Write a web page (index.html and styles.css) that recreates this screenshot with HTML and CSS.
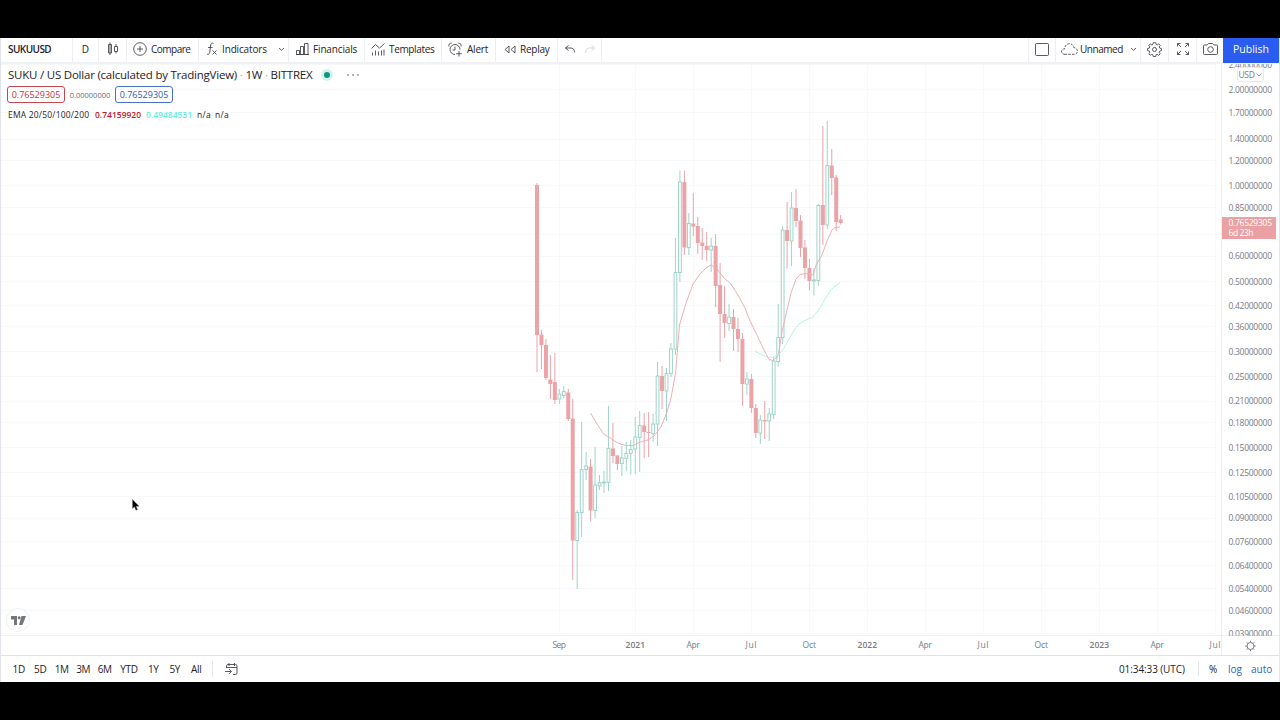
FILE: index.html
```html
<!doctype html>
<html>
<head>
    <meta charset="utf-8">
    <title>SUKUUSD</title>
    <link rel="stylesheet" href="styles.css">
</head>
<body>

<div class="app">
    <div class="toolbar">
        <div class="tool symbol"><span>SUKUUSD</span></div>
        <div class="tool interval"><span>D</span></div>
        <div class="tool candle-style">
            <svg width="12" height="14" viewBox="0 0 12 14"><path d="M3 0.500v2M3 11v2M9 2v2.500M9 9.500v2M1.500 2.500h3v8.500h-3zM3 3v8M7.500 4.500h3v5h-3z"/></svg>
        </div>
        <div class="tool compare">
            <svg width="14" height="14" viewBox="0 0 14 14"><circle cx="7" cy="7" r="6.300"/><path d="M7 4v6M4 7h6"/></svg>
            <span>Compare</span>
        </div>
        <div class="tool indicators">
            <svg width="12" height="14" viewBox="0 0 12 14"><path d="M7.500 1.500C6.500 0.500 5 1 4.700 3L3.700 10.500C3.400 12.500 2 12.800 1 12M2 5.500h4.500M6.500 8.500l4 4M10.500 8.500l-4 4"/></svg>
            <span>Indicators</span>
            <svg class="caret" width="7" height="5" viewBox="0 0 7 5"><path d="M1 1l2.500 2.300L6 1"/></svg>
        </div>
        <div class="tool financials">
            <svg width="13" height="12" viewBox="0 0 13 12"><path d="M0.500 11.500v-4h3v4zM4.500 11.500v-8h3v8zM8.500 11.500v-11h3.500v11zM0 11.500h13"/></svg>
            <span>Financials</span>
        </div>
        <div class="tool templates">
            <svg width="14" height="13" viewBox="0 0 14 13"><path d="M0.500 5.500l4-4 4 3.500 5-4.500M1.500 12.500v-3M4.500 12.500v-5M7.500 12.500v-4M10.500 12.500v-5M13 12.500v-6"/></svg>
            <span>Templates</span>
        </div>
        <div class="tool alert">
            <svg width="15" height="15" viewBox="0 0 15 15"><path d="M12 7.500A5 5 0 1 0 7 12.500M7 4.500v3.500H4.500M1 4.500C0.300 2.500 1.500 1 3.700 1.200M10.300 1.200c2.200-.2 3.400 1.300 2.700 3.300M11 9v5.500M8.200 11.700h5.600"/></svg>
            <span>Alert</span>
        </div>
        <div class="tool replay">
            <svg width="12" height="9" viewBox="0 0 12 9"><path d="M5 1v7L1 4.500zM11 1v7L7 4.500z"/></svg>
            <span>Replay</span>
        </div>
        <div class="tool history">
            <svg width="10" height="8" viewBox="0 0 10 8"><path d="M3.500 0.500l-3 2.500 3 2.500M0.500 3h5C8 3 9.500 4.500 9.500 7.500"/></svg>
            <svg class="disabled" width="10" height="8" viewBox="0 0 10 8"><path d="M6.500 0.500l3 2.500-3 2.500M9.500 3h-5C2 3 0.500 4.500 0.500 7.500"/></svg>
        </div>
        <div class="spacer"></div>
        <div class="tool layout">
            <svg width="14" height="13" viewBox="0 0 14 13"><rect x="0.500" y="0.500" width="13" height="12" rx="1"/></svg>
        </div>
        <div class="tool unnamed">
            <svg class="dashed" width="17" height="12" viewBox="0 0 17 12"><path d="M4 11.300C1.500 11.300 0.500 10 0.500 8.500S2 5.800 3.500 6C4 2.500 6 0.700 8.500 0.700c2.300 0 3.800 1.300 4.200 3.800 2 .3 3.700 1.700 3.700 3.800 0 1.800-1.300 3-3.200 3z"/></svg>
            <span>Unnamed</span>
            <svg class="caret" width="7" height="5" viewBox="0 0 7 5"><path d="M1 1l2.500 2.300L6 1"/></svg>
        </div>
        <div class="tool small">
            <svg width="15" height="15" viewBox="0 0 15 15"><circle cx="7.500" cy="7.500" r="2"/><path d="M6.300 0.700h2.400l.4 1.700 1.100.5 1.500-1 1.500 1.500-1 1.500.6 1.300 1.600.3v2.200l-1.600.3-.6 1.300 1 1.500-1.500 1.500-1.500-1-1.100.5-.4 1.700H6.300l-.4-1.700-1.100-.5-1.500 1-1.500-1.500 1-1.500-.6-1.300-1.600-.3V6.500l1.600-.3.6-1.300-1-1.500 1.500-1.500 1.500 1 1.100-.5z"/></svg>
        </div>
        <div class="tool small">
            <svg width="12" height="12" viewBox="0 0 12 12"><path d="M0.500 3.500V0.500H3.500M8.500 0.500h3v3M11.500 8.500v3h-3M3.500 11.500h-3v-3M0.500 0.500L4 4M11.500 0.500L8 4M11.500 11.500L8 8M0.500 11.500L4 8"/></svg>
        </div>
        <div class="tool camera">
            <svg width="15" height="12" viewBox="0 0 15 12"><path d="M1.500 2h2.700L5.500 0.500h4L10.800 2h2.700q1 0 1 1v7.500q0 1-1 1h-12q-1 0-1-1V3q0-1 1-1z"/><circle cx="7.500" cy="6.500" r="2.800"/></svg>
        </div>
        <div class="publish"><span>Publish</span></div>
    </div>

    <div class="chart">
        <svg id="chart" width="1278" height="591" viewBox="1 64 1278 591"></svg>

        <div class="legend">
            <div class="title">
                <span class="name">SUKU / US Dollar (calculated by TradingView) <i>·</i> 1W <i>·</i> BITTREX</span>
                <span class="status"></span>
                <span class="more"><b></b><b></b><b></b></span>
            </div>
            <div class="prices">
                <span class="bid">0.76529305</span>
                <span class="spread">0.00000000</span>
                <span class="ask">0.76529305</span>
            </div>
            <div class="ema">
                <span class="ema-name">EMA 20/50/100/200</span>
                <span class="ema-fast">0.74159920</span>
                <span class="ema-slow">0.49484531</span>
                <span class="ema-none">n/a</span>
                <span class="ema-none">n/a</span>
            </div>
        </div>

        <div class="currency">USD <svg width="6" height="4" viewBox="0 0 6 4"><path d="M0.500 0.500L3 3l2.500-2.500"/></svg></div>

        <div class="logo">
            <svg width="15" height="9" viewBox="0 0 15 9"><path d="M0 0h6v9H3V3.500H0zM10.500 0H15l-3.500 9H8z"/><circle cx="8.200" cy="1.700" r="1.500"/></svg>
        </div>

        <svg class="cursor" width="8" height="12" viewBox="0 0 8 12"><path d="M0.500 0.500v9l2-1.800 1.500 3.500 1.500-.7L4 7.200h3z"/></svg>
    </div>

    <div class="bottom">
        <div class="ranges">
            <span>1D</span><span>5D</span><span>1M</span><span>3M</span><span>6M</span><span>YTD</span><span>1Y</span><span>5Y</span><span>All</span>
        </div>
        <div class="goto">
            <svg width="13" height="12" viewBox="0 0 13 12"><path d="M1.500 5V3q0-1.500 1.500-1.500h7.500Q12 1.500 12 3v7q0 1.500-1.500 1.500H8M1.500 4.500H12M4 0v3M9.500 0v3M0 8.500h6M4 6l2.500 2.500L4 11"/></svg>
        </div>
        <div class="spacer"></div>
        <span class="clock">01:34:33 (UTC)</span>
        <span class="percent">%</span>
        <span class="log">log</span>
        <span class="auto">auto</span>
    </div>
</div>

<script src="chart.js"></script>
</body>
</html>
```

FILE: styles.css
```css
body {
    margin: 0;
    background: #000;
    font-family: "Open Sans", "Noto Sans", sans-serif;
    color: #1e2128;
}
svg {
    display: block;
    flex: none;
    fill: none;
    stroke: #3c3f46;
    stroke-width: 0.850;
}
#chart {
    stroke-width: 1;
}
.app {
    width: 1278px;
    height: 644px;
    margin-top: 38px;
    border-left: 1px solid #e0e3eb;
    border-right: 1px solid #e6e6ea;
    background: #fff;
    display: flex;
    flex-direction: column;
    overflow: hidden;
}

/* top toolbar */
.toolbar {
    display: flex;
    height: 24px;
    border-bottom: 2px solid #f0f1f4;
    font-size: 10px;
}
.tool {
    box-sizing: border-box;
    display: flex;
    align-items: center;
    height: 24px;
    padding-bottom: 2px;
    border-right: 1px solid #eceef2;
    white-space: nowrap;
    flex: none;
}
.tool span {
    line-height: 22px;
}
.symbol {
    width: 72px;
    padding-left: 7px;
    font-size: 10px;
    font-weight: 600;
    letter-spacing: -0.550px;
}
.interval {
    width: 26px;
    justify-content: center;
}
.candle-style {
    width: 28px;
    justify-content: center;
}
.compare {
    width: 72px;
    padding-left: 6px;
    gap: 4px;
    letter-spacing: -0.500px;
}
.indicators {
    width: 90px;
    padding-left: 7px;
    gap: 4px;
    letter-spacing: -0.150px;
}
.caret {
    margin-left: auto;
    margin-right: 3px;
}
.financials {
    width: 76px;
    padding-left: 7px;
    gap: 4px;
    letter-spacing: -0.150px;
}
.templates {
    width: 77px;
    padding-left: 6px;
    gap: 4px;
    letter-spacing: -0.350px;
}
.alert {
    width: 54px;
    padding-left: 6px;
    gap: 4px;
    letter-spacing: -0.200px;
}
.replay {
    width: 62px;
    padding-left: 8px;
    gap: 4px;
    letter-spacing: -0.250px;
}
.history {
    width: 44px;
    padding-left: 7px;
    gap: 10px;
}
.disabled {
    stroke: #cfd1d6;
}
.spacer {
    flex: 1;
}
.layout {
    width: 28px;
    justify-content: center;
    border-left: 1px solid #eceef2;
}
.unnamed {
    width: 85px;
    padding-left: 5px;
    gap: 2px;
    letter-spacing: -0.450px;
}
.dashed {
    stroke-dasharray: 2.500 1.200;
}
.small {
    width: 28px;
    justify-content: center;
}
.camera {
    width: 26px;
    justify-content: center;
    border-right: 0;
}
.publish {
    width: 56px;
    height: 25px;
    background: #2a5cf0;
    color: #fff;
    font-size: 10.500px;
    line-height: 23px;
    text-align: center;
}

/* chart area */
.chart {
    position: relative;
    height: 591px;
    border-bottom: 1px solid #e0e2e8;
}
.chart text {
    stroke: none;
    fill: #787b86;
    font-size: 8.500px;
}
.chart .year {
    font-weight: 600;
}
.chart .last {
    fill: #fff;
}
.legend {
    position: absolute;
    left: 6px;
    top: 2px;
    white-space: nowrap;
}
.title {
    display: flex;
    align-items: center;
    height: 17px;
    padding-left: 1px;
    font-size: 11.500px;
    letter-spacing: -0.220px;
}
.title i {
    color: #a0a3ab;
    font-style: normal;
}
.name {
    width: 303px;
}
.status {
    width: 6px;
    height: 6px;
    margin-left: 10px;
    border: 3px solid #d5f2ec;
    border-radius: 50%;
    background: #089981;
}
.more {
    display: flex;
    gap: 3px;
    margin-left: 14px;
}
.more b {
    width: 2px;
    height: 2px;
    border-radius: 1px;
    background: #9598a1;
}
.prices {
    display: flex;
    align-items: center;
    margin-top: 3px;
    font-size: 9px;
}
.bid, .ask {
    box-sizing: border-box;
    width: 58px;
    height: 17px;
    border: 1px solid #c4474f;
    border-radius: 3px;
    line-height: 15px;
    text-align: center;
    color: #c4333d;
}
.ask {
    border-color: #4a70c8;
    color: #2e59b8;
}
.spread {
    width: 50px;
    text-align: center;
    color: #6a6d78;
    font-size: 7.500px;
}
.ema {
    display: flex;
    height: 14px;
    margin-top: 5px;
    padding-left: 1px;
    font-size: 8.500px;
    line-height: 14px;
}
.ema-name {
    width: 87px;
    letter-spacing: 0.200px;
}
.ema-fast {
    width: 51px;
    color: #c4202c;
    font-weight: 600;
}
.ema-slow {
    width: 51px;
    color: #5ff0e2;
    font-weight: 600;
}
.ema-none {
    width: 18px;
    letter-spacing: 0.300px;
}
.currency {
    position: absolute;
    left: 1236px;
    top: 3px;
    display: flex;
    align-items: center;
    justify-content: center;
    gap: 2px;
    width: 25px;
    height: 13px;
    border: 1px solid #e6e8ee;
    border-radius: 3px;
    background: #fff;
    color: #787b86;
    font-size: 8.500px;
    line-height: 12px;
    letter-spacing: -0.400px;
}
.currency svg {
    stroke: #787b86;
}
.logo {
    position: absolute;
    left: 5px;
    top: 544px;
    display: flex;
    align-items: center;
    justify-content: center;
    width: 22px;
    height: 22px;
    border: 1px solid #eef0f3;
    border-radius: 50%;
    background: #fff;
}
.logo svg {
    fill: #75777c;
    stroke: none;
}
.cursor {
    position: absolute;
    left: 131px;
    top: 435px;
    fill: #000;
    stroke: #777;
    stroke-width: 0.500;
}

/* bottom bar */
.bottom {
    display: flex;
    align-items: center;
    height: 26px;
    font-size: 10px;
}
.ranges {
    display: flex;
    width: 211px;
    height: 16px;
    line-height: 16px;
    border-right: 1px solid #e6e8ee;
    letter-spacing: -0.300px;
}
.ranges span {
    width: 21.500px;
    text-align: center;
}
.ranges span:first-child {
    margin-left: 7px;
}
.ranges span:nth-child(6) {
    width: 27px;
}
.goto {
    margin-left: 12px;
}
.clock {
    width: 79px;
    letter-spacing: -0.100px;
}
.percent {
    padding-left: 10px;
    border-left: 1px solid #e0e2e8;
    width: 19px;
}
.log, .auto {
    width: 23px;
    color: #2f5fc4;
}
.auto {
    width: 28px;
}
```

FILE: chart.js
```js
var NS = 'http://www.w3.org/2000/svg';
var chart = document.getElementById('chart');

// high, body top, body bottom, low, 1 = up / 0 = down; one row per week
var candles = [
    [183, 185, 335, 372, 0], [330, 334.5, 345, 369, 0], [339, 345, 378, 380, 0],
    [355, 379.5, 384, 399, 0], [353, 382, 400, 404, 0], [389, 394, 399, 404, 1],
    [386, 391.5, 395.5, 398, 1], [389, 392.5, 419, 421, 0], [399, 418.5, 540.5, 580, 0],
    [510, 512.5, 540.5, 589, 1], [422, 469.5, 512.5, 537, 1], [452, 466, 469.5, 480, 1],
    [459, 466.5, 510.5, 521.5, 0], [447, 485, 510.5, 518, 1], [475, 482.5, 486, 490, 1],
    [471, 482, 483, 493, 1], [406, 448.5, 482.5, 491, 1], [423, 448.5, 456, 463, 0],
    [455, 455.5, 464, 470, 0], [446, 458, 463.5, 476, 1], [442, 453.5, 458.5, 471, 1],
    [440, 449.5, 453.5, 474.5, 1], [417, 437, 449, 474, 1], [411, 425.5, 437.5, 472, 1],
    [413, 425.5, 432, 458, 0], [412, 432, 433, 457, 0], [414, 424, 433.5, 442, 1],
    [362, 376, 424, 446, 1], [366, 376, 391, 409, 0], [368, 373.5, 391, 421, 1],
    [343, 349, 373.5, 377, 1], [238, 272.5, 349, 355, 1], [170.5, 182, 272.5, 282, 1],
    [170.5, 182, 247.5, 255, 0], [213, 223.5, 247.5, 255, 1], [193, 223.5, 226.5, 236, 0],
    [217, 226, 243, 254, 0], [228, 242.5, 246, 260, 0], [232, 246, 250, 261, 0],
    [238, 246, 250, 272, 1], [234, 246, 286, 307, 0], [263, 285, 314, 362, 0],
    [286, 314, 323, 338, 0], [304, 317, 323.5, 331, 1], [309, 317, 329, 351, 0],
    [318, 329, 339, 352, 0], [333, 339, 384, 406, 0], [372, 379, 384, 395, 1],
    [374, 379, 408, 413, 0], [404, 408, 433, 438, 0], [415, 420, 433, 444, 1],
    [401, 420, 421.5, 439, 0], [408, 414, 421, 441, 1], [357, 361, 414.5, 419, 1],
    [304, 337.5, 361.5, 366.5, 1], [226, 230, 337.5, 344, 1], [202, 230, 241, 268.5, 0],
    [192, 208, 241, 266, 1], [189, 208, 221, 227, 0], [215, 220.5, 248, 257, 0],
    [240, 247.5, 268, 279, 0], [259, 268, 281, 290, 0], [268, 280, 281, 295.5, 1],
    [204, 205.5, 280.5, 286, 1], [126, 205, 225, 245, 0], [121, 165.5, 225, 229, 1],
    [149, 165.5, 178, 195, 0], [175, 177.5, 222, 231, 0], [215, 219.5, 223, 224.5, 0]
];

var ema20 = '590.5,413 597,424 604,434.500 609,437 613,440 619,443.500 626,445.500 633,445.500 640,442 648,440 654,436 661,427 667,412 671,398 675.7,372 679.5,325 686,303 693,284 700,274 706,268 711,265 717,269 724,278 731,284 738,295 745,308 750,321 757,335 764,350 769,359.500 773,360.500 778,356 780,345 782,332 787,310 791,293 796,279 800,274.500 806,273.500 813,275 816,265 822,255 827,241 832,230 835,227.500 840,227';
var ema50 = '755,351 762,355 768,357.500 774,357 779,354 784,348 790,337 795,329 800,323 806,320 813,317 818,311 824,301 830,291 835,286 840,282.500';

var prices = [2.4, 2, 1.7, 1.4, 1.2, 1, 0.85, 0.7, 0.6, 0.5, 0.42, 0.36, 0.3, 0.25, 0.21,
    0.18, 0.15, 0.125, 0.105, 0.09, 0.076, 0.064, 0.054, 0.046, 0.039];
var months = [[559, 'Sep'], [635, '2021'], [693, 'Apr'], [751, 'Jul'], [809, 'Oct'], [867, '2022'],
    [925, 'Apr'], [983, 'Jul'], [1041, 'Oct'], [1099, '2023'], [1157, 'Apr'], [1215, 'Jul']];

function add(tag, attrs, text) {
    var node = document.createElementNS(NS, tag);
    for (var key in attrs) {
        node.setAttribute(key, attrs[key]);
    }
    if (text) {
        node.textContent = text;
    }
    chart.appendChild(node);
}

function line(x1, y1, x2, y2, color) {
    add('line', {x1: x1, y1: y1, x2: x2, y2: y2, stroke: color});
}

function priceY(price) {
    return 185.5 - Math.log(price) * 138.1;
}

// grid
months.forEach(function(m) {
    line(m[0] + 0.5, 64, m[0] + 0.5, 633, '#f7f8f9');
});
prices.forEach(function(p) {
    var y = Math.floor(priceY(p)) + 0.5;
    line(1, y, 1217, y, '#f7f8f9');
});

// candles
candles.forEach(function(c, i) {
    var x = 537 + i * 4.466;
    var color = c[4] ? '#9ed5c8' : '#eba3a7';
    line(x, c[0], x, c[4] ? c[1] : c[3], color);
    if (c[4]) {
        line(x, c[2], x, c[3], color);
    }
    add('rect', {
        x: x - (c[4] ? 1.4 : 2),
        y: c[1],
        width: c[4] ? 2.8 : 4,
        height: Math.max(c[2] - c[1], 1),
        fill: c[4] ? '#fff' : color,
        stroke: c[4] ? color : 'none'
    });
});

add('polyline', {points: ema20, stroke: '#eeb0b3'});
add('polyline', {points: ema50, stroke: '#b0f5ea'});

// axes
line(1221.5, 64, 1221.5, 655, '#eceef1');
line(1, 635.5, 1279, 635.5, '#eff0f3');
prices.forEach(function(p) {
    if (p !== 0.7) {
        add('text', {x: 1228.5, y: priceY(p) + 3.4, textLength: 43.5}, p.toFixed(8));
    }
});
add('rect', {x: 1222, y: 636, width: 57, height: 20, fill: '#fff', stroke: 'none'});
months.forEach(function(m) {
    var year = m[1].length === 4;
    add('text', {
        x: m[0] - (year ? 9.5 : m[1] === 'Jul' ? 5.5 : 6.5),
        y: 648,
        textLength: year ? 19.5 : m[1] === 'Jul' ? 11 : 13.5,
        'class': year ? 'year' : 'month'
    }, m[1]);
});
add('rect', {x: 1222, y: 217, width: 54, height: 22, fill: '#eba0a3', stroke: 'none'});
add('text', {x: 1228.5, y: 226.2, textLength: 43.5, 'class': 'last'}, '0.76529305');
add('text', {x: 1228.5, y: 236.2, textLength: 25, 'class': 'last'}, '6d 23h');

// axis settings
add('circle', {cx: 1250.5, cy: 646, r: 3.5, stroke: '#787b86'});
for (var a = 0; a < 8; a++) {
    var dx = Math.cos(a * Math.PI / 4);
    var dy = Math.sin(a * Math.PI / 4);
    line(1250.5 + dx * 3.5, 646 + dy * 3.5, 1250.5 + dx * 5.2, 646 + dy * 5.2, '#787b86');
}
```
